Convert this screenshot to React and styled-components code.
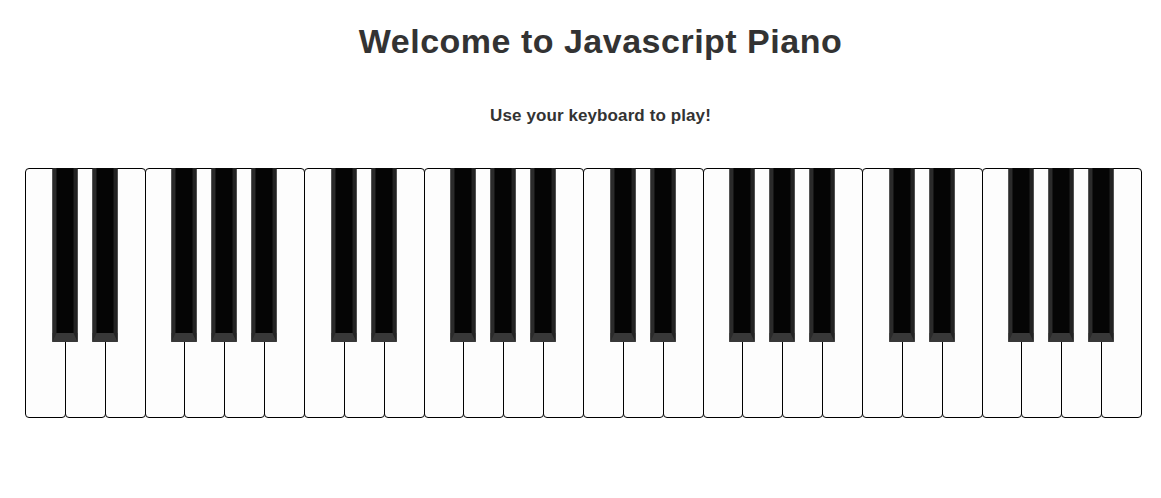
import React from 'react';
import styled, { createGlobalStyle } from 'styled-components';

const GlobalStyle = createGlobalStyle`
  body {
    margin: 0;
    background: #fff;
    font-family: "Liberation Sans", Arial, sans-serif;
    color: #333;
  }
`;

const Page = styled.div`
  display: flex;
  flex-direction: column;
`;

const Header = styled.header`
  padding-left: 40px;
  text-align: center;
`;

const Title = styled.h1`
  margin: 21px 0 0;
  font-size: 34px;
  line-height: 40px;
  font-weight: bold;
  letter-spacing: 0.5px;
`;

const Subtitle = styled.p`
  margin: 45px 0 0;
  font-size: 17px;
  line-height: 20px;
  font-weight: bold;
  letter-spacing: 0.1px;
`;

const Keyboard = styled.div`
  display: flex;
  width: 1117px;
  height: 250px;
  margin: 42px 0 0 25px;
`;

const WhiteKey = styled.div`
  position: relative;
  flex: 1;
  box-sizing: border-box;
  background: #fdfdfd;
  border: 1px solid #000;
  border-radius: 4px;
  & + & {
    margin-left: -1px;
  }
`;

const BlackKey = styled.div`
  position: absolute;
  z-index: 2;
  top: -1px;
  left: 100%;
  transform: translateX(-50%);
  width: 25px;
  height: 174px;
  box-sizing: border-box;
  background: #050505;
  border-left: 4px solid #2b2b2b;
  border-right: 4px solid #232323;
  border-bottom: 9px solid #383838;
`;

// white keys of one octave, and whether a sharp follows each
const octave = [true, true, false, true, true, true, false];
const keys = Array.from({ length: 4 }, () => octave).flat();

export default function App() {
  return (
    <Page>
      <GlobalStyle />
      <Header>
        <Title>Welcome to Javascript Piano</Title>
        <Subtitle>Use your keyboard to play!</Subtitle>
      </Header>
      <Keyboard>
        {keys.map((sharp, i) => (
          <WhiteKey key={i}>{sharp && <BlackKey />}</WhiteKey>
        ))}
      </Keyboard>
    </Page>
  );
}
